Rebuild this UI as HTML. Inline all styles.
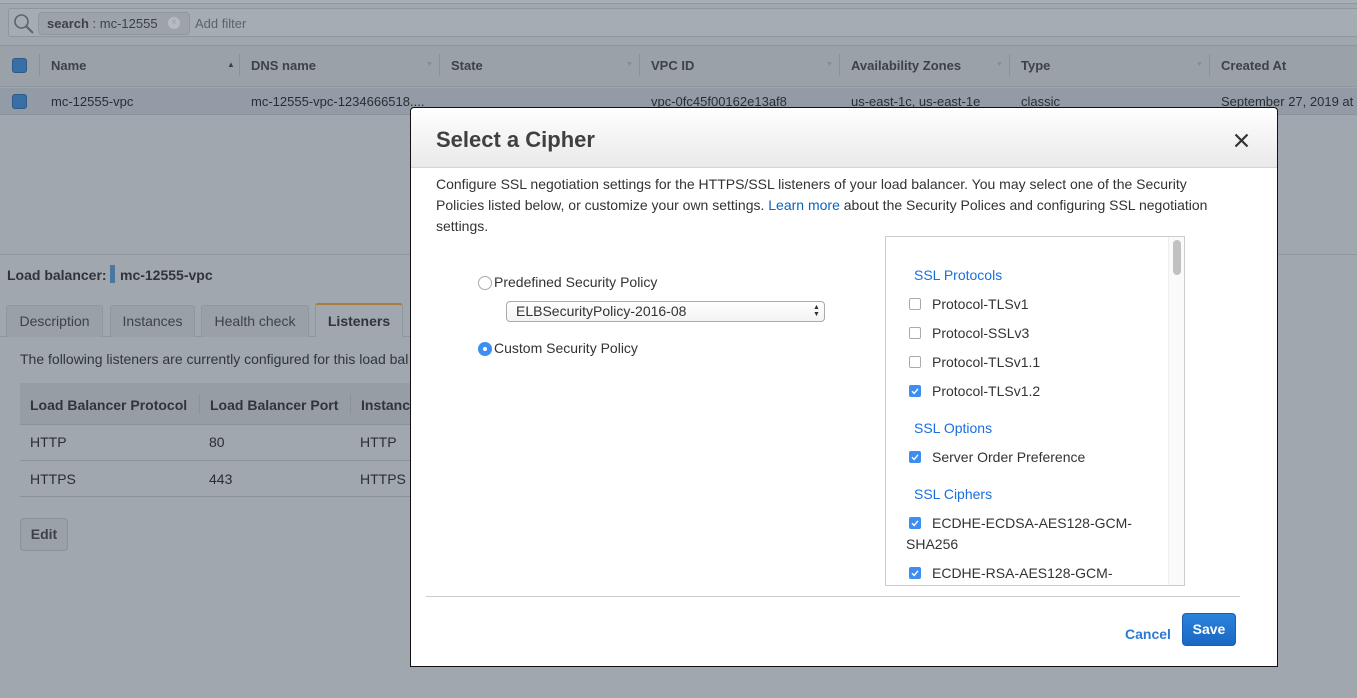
<!DOCTYPE html>
<html><head><meta charset="utf-8"><style>
*{box-sizing:border-box;margin:0;padding:0}
body{width:1357px;height:698px;overflow:hidden;background:#a0a7ae;font-family:"Liberation Sans",Helvetica,Arial,sans-serif;font-size:14px;color:#2a2e33;position:relative}
.abs{position:absolute;white-space:nowrap}
.b{font-weight:bold}
</style></head><body>
<div class="abs" style="left:0;top:0;width:1357px;height:4px;background:#a7aeb5;border-bottom:1px solid #8f969d"></div>
<div class="abs" style="left:8px;top:8px;width:1349px;height:29px;border:1px solid #8f969d;border-right:none;background:#a5acb3;border-radius:3px 0 0 3px"></div>
<svg class="abs" style="left:13px;top:13px" width="22" height="22" viewBox="0 0 22 22"><circle cx="8.5" cy="8.5" r="6.5" fill="none" stroke="#5d646b" stroke-width="1.6"/><line x1="13" y1="13" x2="20" y2="20" stroke="#5d646b" stroke-width="2"/></svg>
<div class="abs" style="left:38px;top:12px;width:152px;height:23px;border:1px solid #8f969d;border-radius:4px;background:#9ca3aa;font-size:13px;line-height:21px;padding-left:8px;color:#3c4248"><b>search</b> : mc-12555</div>
<div class="abs" style="left:168px;top:17px;width:12px;height:12px;border-radius:50%;background:#b5bbc1;color:#9aa1a8;font-size:10px;line-height:12px;text-align:center">×</div>
<div class="abs" style="left:195px;top:16px;font-size:13px;color:#5c636a">Add filter</div>
<div class="abs" style="left:0;top:45px;width:1357px;height:42px;background:#9aa1a8;border-top:1px solid #8f969d;border-bottom:1px solid #8f969d"></div>
<div class="abs" style="left:12px;top:58px;width:15px;height:15px;border-radius:3px;background:#3a6fa6;border:1px solid #2c5a8a"></div>
<div class="abs b" style="left:51px;top:58px;font-size:13px;color:#3c4248">Name</div>
<div class="abs" style="left:227px;top:60px;font-size:8px;color:#3c4248">▲</div>
<div class="abs b" style="left:251px;top:58px;font-size:13px;color:#3c4248">DNS name</div>
<div class="abs b" style="left:451px;top:58px;font-size:13px;color:#3c4248">State</div>
<div class="abs b" style="left:651px;top:58px;font-size:13px;color:#3c4248">VPC ID</div>
<div class="abs b" style="left:851px;top:58px;font-size:13px;color:#3c4248">Availability Zones</div>
<div class="abs b" style="left:1021px;top:58px;font-size:13px;color:#3c4248">Type</div>
<div class="abs b" style="left:1221px;top:58px;font-size:13px;color:#3c4248">Created At</div>
<div class="abs" style="left:39px;top:54px;width:1px;height:22px;background:#8a9197"></div>
<div class="abs" style="left:239px;top:54px;width:1px;height:22px;background:#8a9197"></div>
<div class="abs" style="left:439px;top:54px;width:1px;height:22px;background:#8a9197"></div>
<div class="abs" style="left:639px;top:54px;width:1px;height:22px;background:#8a9197"></div>
<div class="abs" style="left:839px;top:54px;width:1px;height:22px;background:#8a9197"></div>
<div class="abs" style="left:1009px;top:54px;width:1px;height:22px;background:#8a9197"></div>
<div class="abs" style="left:1209px;top:54px;width:1px;height:22px;background:#8a9197"></div>
<div class="abs" style="left:426px;top:61px;font-size:7px;color:#848b92">▼</div>
<div class="abs" style="left:626px;top:61px;font-size:7px;color:#848b92">▼</div>
<div class="abs" style="left:826px;top:61px;font-size:7px;color:#848b92">▼</div>
<div class="abs" style="left:996px;top:61px;font-size:7px;color:#848b92">▼</div>
<div class="abs" style="left:1196px;top:61px;font-size:7px;color:#848b92">▼</div>
<div class="abs" style="left:0;top:88px;width:1357px;height:27px;background:#939ca6;border-bottom:1px solid #8a939c"></div>
<div class="abs" style="left:12px;top:94px;width:15px;height:15px;border-radius:3px;background:#3a6fa6;border:1px solid #2c5a8a"></div>
<div class="abs" style="left:51px;top:94px;font-size:13px">mc-12555-vpc</div>
<div class="abs" style="left:251px;top:94px;font-size:13px">mc-12555-vpc-1234666518....</div>
<div class="abs" style="left:651px;top:94px;font-size:13px">vpc-0fc45f00162e13af8</div>
<div class="abs" style="left:851px;top:94px;font-size:13px">us-east-1c, us-east-1e</div>
<div class="abs" style="left:1021px;top:94px;font-size:13px">classic</div>
<div class="abs" style="left:1221px;top:94px;font-size:13px">September 27, 2019 at 1</div>
<div class="abs" style="left:0;top:254px;width:1357px;height:1px;background:#8f969d"></div>
<div class="abs b" style="left:7px;top:267px;font-size:14px;color:#2f353b">Load balancer:</div>
<div class="abs" style="left:110px;top:265px;width:5px;height:18px;background:#4a78a3"></div>
<div class="abs b" style="left:120px;top:267px;font-size:14px;color:#2f353b">mc-12555-vpc</div>
<div class="abs" style="left:0;top:336px;width:420px;height:1px;background:#8f969d"></div>
<div class="abs" style="left:6px;top:305px;width:97px;height:32px;border:1px solid #8f969d;border-bottom:none;border-radius:3px 3px 0 0;background:#99a0a7;font-size:14px;line-height:31px;text-align:center;color:#3c4248">Description</div>
<div class="abs" style="left:110px;top:305px;width:85px;height:32px;border:1px solid #8f969d;border-bottom:none;border-radius:3px 3px 0 0;background:#99a0a7;font-size:14px;line-height:31px;text-align:center;color:#3c4248">Instances</div>
<div class="abs" style="left:201px;top:305px;width:108px;height:32px;border:1px solid #8f969d;border-bottom:none;border-radius:3px 3px 0 0;background:#99a0a7;font-size:14px;line-height:31px;text-align:center;color:#3c4248">Health check</div>
<div class="abs b" style="left:315px;top:303px;width:88px;height:34px;border:1px solid #8f969d;border-top:2px solid #a77c3d;border-bottom:none;border-radius:3px 3px 0 0;background:#a0a7ae;font-size:14px;line-height:32px;text-align:center;color:#2f353b">Listeners</div>
<div class="abs" style="left:20px;top:351px;font-size:14px;color:#2f353b">The following listeners are currently configured for this load bal</div>
<div class="abs" style="left:20px;top:383px;width:400px;height:42px;background:#969da4;border-bottom:1px solid #8a9197"></div>
<div class="abs b" style="left:30px;top:397px;font-size:14px;color:#2f353b">Load Balancer Protocol</div>
<div class="abs" style="left:199px;top:394px;width:1px;height:20px;background:#8a9197"></div>
<div class="abs b" style="left:210px;top:397px;font-size:14px;color:#2f353b">Load Balancer Port</div>
<div class="abs" style="left:350px;top:394px;width:1px;height:20px;background:#8a9197"></div>
<div class="abs b" style="left:361px;top:397px;font-size:14px;color:#2f353b">Instanc</div>
<div class="abs" style="left:30px;top:434px">HTTP</div><div class="abs" style="left:209px;top:434px">80</div><div class="abs" style="left:360px;top:434px">HTTP</div>
<div class="abs" style="left:20px;top:460px;width:400px;height:1px;background:#8a9197"></div>
<div class="abs" style="left:30px;top:471px">HTTPS</div><div class="abs" style="left:209px;top:471px">443</div><div class="abs" style="left:360px;top:471px">HTTPS</div>
<div class="abs" style="left:20px;top:496px;width:400px;height:1px;background:#8a9197"></div>
<div class="abs b" style="left:20px;top:518px;width:48px;height:33px;border:1px solid #8a9197;border-radius:4px;background:#9aa1a8;text-align:center;line-height:31px;color:#3c4248">Edit</div>
<div class="abs" style="left:410px;top:107px;width:868px;height:560px;background:#fff;border:1px solid #111;border-radius:4px 4px 0 0"></div>
<div class="abs" style="left:411px;top:108px;width:866px;height:60px;background:linear-gradient(#fff,#e9e9e9);border-bottom:1px solid #d5d5d5;border-radius:4px 4px 0 0"></div>
<div class="abs b" style="left:436px;top:127px;font-size:22px;color:#404040">Select a Cipher</div>
<svg class="abs" style="left:1234px;top:133px" width="15" height="15" viewBox="0 0 15 15"><path d="M1.5 1.5L13.5 13.5M13.5 1.5L1.5 13.5" stroke="#333" stroke-width="2.2"/></svg>
<div class="abs" style="left:436px;top:174px;width:800px;white-space:normal;font-size:14px;line-height:21px;color:#333">Configure SSL negotiation settings for the HTTPS/SSL listeners of your load balancer. You may select one of the Security Policies listed below, or customize your own settings. <span style="color:#0a62c4">Learn more</span> about the Security Polices and configuring SSL negotiation settings.</div>
<div class="abs" style="left:478px;top:276px;width:14px;height:14px;border-radius:50%;border:1px solid #aaa;background:#fff"></div>
<div class="abs" style="left:494px;top:274px;color:#333">Predefined Security Policy</div>
<div class="abs" style="left:506px;top:301px;width:319px;height:21px;border:1px solid #aaa;border-radius:4px;background:linear-gradient(#fff,#f3f3f3);font-size:14px;line-height:19px;padding-left:9px;color:#333">ELBSecurityPolicy-2016-08</div>
<div class="abs" style="left:813px;top:304px;font-size:7px;line-height:7px;color:#333">▲<br>▼</div>
<div class="abs" style="left:478px;top:342px;width:14px;height:14px;border-radius:50%;background:#3d8ef0"><div style="width:4px;height:4px;border-radius:50%;background:#fff;margin:5px"></div></div>
<div class="abs" style="left:494px;top:340px;color:#333">Custom Security Policy</div>
<div class="abs" style="left:885px;top:236px;width:300px;height:350px;border:1px solid #ccc"></div>
<div class="abs" style="left:1168px;top:237px;width:16px;height:348px;border-left:1px solid #eee;background:#fafafa"></div>
<div class="abs" style="left:1173px;top:240px;width:8px;height:35px;border-radius:4px;background:#c1c1c1"></div>
<div class="abs" style="left:914px;top:267px;color:#1a6fe0">SSL Protocols</div>
<div class="abs" style="left:909px;top:298px;width:12px;height:12px;border:1px solid #aaa;border-radius:2px"></div><div class="abs" style="left:932px;top:296px;color:#333">Protocol-TLSv1</div>
<div class="abs" style="left:909px;top:327px;width:12px;height:12px;border:1px solid #aaa;border-radius:2px"></div><div class="abs" style="left:932px;top:325px;color:#333">Protocol-SSLv3</div>
<div class="abs" style="left:909px;top:356px;width:12px;height:12px;border:1px solid #aaa;border-radius:2px"></div><div class="abs" style="left:932px;top:354px;color:#333">Protocol-TLSv1.1</div>
<svg class="abs" style="left:909px;top:385px" width="12" height="12"><rect width="12" height="12" rx="2" fill="#3d8ef0"/><path d="M3 6.2L5.2 8.4L9 3.8" stroke="#fff" stroke-width="1.4" fill="none"/></svg><div class="abs" style="left:932px;top:383px;color:#333">Protocol-TLSv1.2</div>
<div class="abs" style="left:914px;top:420px;color:#1a6fe0">SSL Options</div>
<svg class="abs" style="left:909px;top:451px" width="12" height="12"><rect width="12" height="12" rx="2" fill="#3d8ef0"/><path d="M3 6.2L5.2 8.4L9 3.8" stroke="#fff" stroke-width="1.4" fill="none"/></svg><div class="abs" style="left:932px;top:449px;color:#333">Server Order Preference</div>
<div class="abs" style="left:914px;top:486px;color:#1a6fe0">SSL Ciphers</div>
<svg class="abs" style="left:909px;top:517px" width="12" height="12"><rect width="12" height="12" rx="2" fill="#3d8ef0"/><path d="M3 6.2L5.2 8.4L9 3.8" stroke="#fff" stroke-width="1.4" fill="none"/></svg><div class="abs" style="left:932px;top:515px;color:#333">ECDHE-ECDSA-AES128-GCM-</div>
<div class="abs" style="left:906px;top:536px;color:#333">SHA256</div>
<svg class="abs" style="left:909px;top:567px" width="12" height="12"><rect width="12" height="12" rx="2" fill="#3d8ef0"/><path d="M3 6.2L5.2 8.4L9 3.8" stroke="#fff" stroke-width="1.4" fill="none"/></svg><div class="abs" style="left:932px;top:565px;color:#333">ECDHE-RSA-AES128-GCM-</div>
<div class="abs" style="left:886px;top:580px;width:282px;height:5px;background:#fff"></div>
<div class="abs" style="left:426px;top:596px;width:814px;height:1px;background:#ccc"></div>
<div class="abs b" style="left:1125px;top:626px;color:#2a7ad6">Cancel</div>
<div class="abs b" style="left:1182px;top:613px;width:54px;height:33px;border-radius:4px;background:linear-gradient(#2b82db,#1a68c4);border:1px solid #1760b5;color:#fff;text-align:center;line-height:31px">Save</div>
</body></html>
